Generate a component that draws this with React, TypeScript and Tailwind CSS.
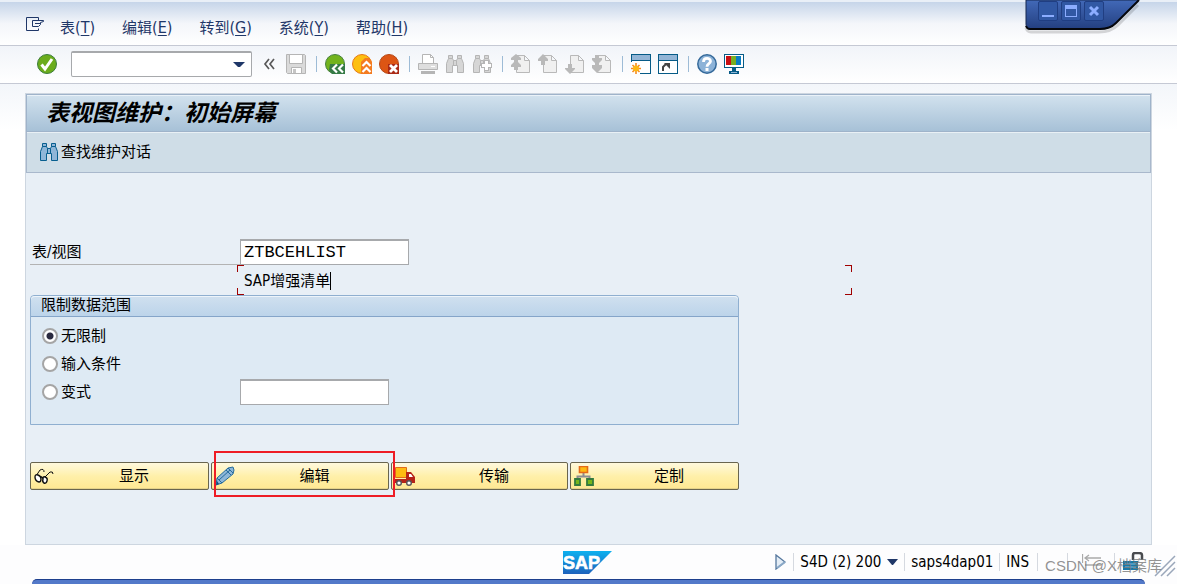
import React from "react";

const FONT = "font-['DejaVu_Sans_Condensed','Noto_Sans','Noto_Sans_CJK_SC',sans-serif]";

const MENU = [
  { label: "表", hotkey: "T" },
  { label: "编辑", hotkey: "E" },
  { label: "转到", hotkey: "G" },
  { label: "系统", hotkey: "Y" },
  { label: "帮助", hotkey: "H" },
];

function Icon({ children }: { children: React.ReactNode }) {
  return (
    <svg width="20" height="20" viewBox="0 0 20 20" fill="none" aria-hidden="true" className="block shrink-0">
      {children}
    </svg>
  );
}

function ToolButton({ title, children }: { title: string; children: React.ReactNode }) {
  return (
    <button type="button" aria-label={title} className="shrink-0">
      <Icon>{children}</Icon>
    </button>
  );
}

function Divider() {
  return <span className="ml-0.5 h-4 w-px shrink-0 bg-[#9dbbd6]" />;
}

function Binoculars({ fill, stroke }: { fill: string; stroke: string }) {
  return (
    <path
      d="M3.5 1.5h4v3l1 2h3l1-2v-3h4v3l2 5v9h-6v-7h-5v7h-6v-9l2-5zM3.5 4.5h4M12.5 4.5h4M8.5 6.5v5M11.5 6.5v5"
      fill={fill}
      stroke={stroke}
    />
  );
}

function PageShape() {
  return <path d="M5.5 1.5h8l5 5v12h-13zM13.5 1.5v5h5" fill="#f0f0f0" stroke="#b9b9b9" />;
}

function WindowShape() {
  return (
    <>
      <path d="M0 0h20v20H0z" fill="#065b87" />
      <path d="M1 1h18v5H1z" fill="#93b5d6" />
      <path d="M1 7h18v12H1z" fill="#fff" />
    </>
  );
}

function Toolbar() {
  return (
    <div className="flex h-[38px] items-center border-b border-[#c5c9d4] bg-linear-to-b from-[#f1f4f9] to-white pb-0.5 pl-[37px]">
      <ToolButton title="回车">
        <circle cx="10" cy="10" r="9.5" fill="#6bac1c" stroke="#3c7d3c" />
        <path d="M4.5 10.5l3.5 4.5 7-10" stroke="#fff" strokeWidth="3" />
      </ToolButton>
      <div className="relative ml-3.5 h-[26px] w-[181px]">
        <input aria-label="命令" className="h-full w-full rounded-xs border border-t-2 border-[#a7a9ac] bg-white px-1 outline-none" />
        <svg width="12" height="7" viewBox="0 0 12 7" className="absolute top-2.5 right-[7px]" aria-hidden="true">
          <path d="M0 1h12L7 6H5z" fill="#1f3768" />
        </svg>
      </div>
      <div className="ml-[11px] flex items-center gap-[11px]">
        <button type="button" aria-label="收起">
          <svg width="12" height="12" viewBox="0 0 12 12" fill="none" className="block">
            <path d="M6 1L2 6l4 5M11 1L7 6l4 5" stroke="#595959" strokeWidth="1.7" />
          </svg>
        </button>
        <ToolButton title="保存">
          <path d="M.5.5h18l1 1v18H1.5l-1-1z" fill="#dadada" stroke="#b5b5b5" />
          <path d="M3.5.5h13v9h-13zM5.5 13.5h10v6h-10z" fill="#fff" stroke="#b5b5b5" />
          <path d="M7 15h3v4H7z" fill="#c5c5c5" />
        </ToolButton>
      </div>
      <div className="ml-2 flex items-center gap-2">
        <Divider />
        <div className="flex gap-[7px]">
          <ToolButton title="返回">
            <circle cx="10" cy="10" r="9.5" fill="#72b31d" stroke="#478040" />
            <path d="M5 10h15v10H7l-3-4z" fill="#357a46" />
            <path d="M12 10.5l-4 4 4 4M18 10.5l-4 4 4 4" stroke="#fff" strokeWidth="2.2" />
          </ToolButton>
          <ToolButton title="退出">
            <circle cx="10" cy="10" r="9.5" fill="#fdbf10" stroke="#e77817" />
            <path d="M9 8l4-4h4l3 4v12H9z" fill="#f47b20" />
            <path d="M10.5 12l4-4 4 4M10.5 18l4-4 4 4" stroke="#fff" strokeWidth="2.2" />
          </ToolButton>
          <ToolButton title="取消">
            <circle cx="10" cy="10" r="9.5" fill="#dd5514" stroke="#b64716" />
            <path d="M9 10h11v10H9z" fill="#aa2a16" />
            <path d="M11 11l7 7M18 11l-7 7" stroke="#fff" strokeWidth="2.8" />
          </ToolButton>
        </div>
        <Divider />
        <div className="flex gap-[7px]">
          <ToolButton title="打印">
            <path d="M4.5 9.5v-9h8l3 3v6" fill="#fff" stroke="#b5b5b5" />
            <path d="M12.5.5v3h3" stroke="#b5b5b5" />
            <path d="M.5 9.5h19v6H.5z" fill="#dedede" stroke="#b5b5b5" />
            <path d="M3 17h14v3H3z" fill="#b5b5b5" />
            <path d="M13 12h4v1h-4z" fill="#fff" />
          </ToolButton>
          <ToolButton title="查找">
            <Binoculars fill="#d6d6d6" stroke="#b5b5b5" />
          </ToolButton>
          <ToolButton title="查找下一个">
            <Binoculars fill="#d6d6d6" stroke="#b5b5b5" />
            <path d="M9 9h3V6h5v3h3v5h-3v3h-5v-3H9z" fill="#b5b5b5" />
            <path d="M13 7h3v3h3v3h-3v3h-3v-3h-3v-3h3z" fill="#fff" />
          </ToolButton>
        </div>
        <Divider />
        <div className="flex gap-[7px]">
          <ToolButton title="第一页">
            <PageShape />
            <path d="M5 0l5 4v2H7v2l3 3v2H7v3H3v-3H0v-2l3-3V6H0V4z" fill="#b9b9b9" />
          </ToolButton>
          <ToolButton title="上一页">
            <PageShape />
            <path d="M5 0l5 5v2H7v4H3V7H0V5z" fill="#b9b9b9" />
          </ToolButton>
          <ToolButton title="下一页">
            <PageShape />
            <path d="M3 10h4v4h3v1l-5 5-5-5v-1h3z" fill="#b9b9b9" />
          </ToolButton>
          <ToolButton title="最后一页">
            <PageShape />
            <path d="M3 1h4v3h3v2L7 9v2h3v3l-5 5-5-5v-3h3V9L0 6V4h3z" fill="#b9b9b9" />
          </ToolButton>
        </div>
        <Divider />
        <div className="flex gap-[7px]">
          <ToolButton title="新建会话">
            <WindowShape />
            <path d="M0 8h9v12H0z" fill="#fff" />
            <path d="M5 9v11M0 14.5h10M1.5 11l7 7M8.5 11l-7 7" stroke="#f58a1f" strokeWidth="1.6" />
            <circle cx="5" cy="14.5" r="3" fill="#fdb813" />
          </ToolButton>
          <ToolButton title="创建快捷方式">
            <WindowShape />
            <path d="M5 17v-4l3-3h1" stroke="#444" strokeWidth="2" />
            <path d="M6 9h6v6z" fill="#444" />
          </ToolButton>
        </div>
        <Divider />
        <div className="flex gap-[7px]">
          <ToolButton title="帮助">
            <circle cx="10" cy="10" r="9.2" fill="#8db3d8" stroke="#34699a" strokeWidth="1.5" />
            <path d="M6.5 8c0-5 7-4.5 7-.8 0 2.5-3.5 2.5-3.5 5.5" stroke="#fff" strokeWidth="2.8" />
            <path d="M8.5 14h3v3h-3z" fill="#fff" />
          </ToolButton>
          <ToolButton title="定制本地布局">
            <path d="M0 0h20v14H0z" fill="#065b87" />
            <path d="M1 1h18v12H1z" fill="#fff" />
            <path d="M2 2h5v9H2z" fill="#c80f14" />
            <path d="M7 2h5v9H7z" fill="#78ad21" />
            <path d="M12 2h5v9h-5z" fill="#087cc2" />
            <path d="M8 14h4v3h3v3H5v-3h3z" fill="#065b87" />
            <path d="M7 18h6v1H7z" fill="#8fb5d5" />
          </ToolButton>
        </div>
      </div>
    </div>
  );
}

function WindowControls() {
  const box = "flex size-5 items-center justify-center rounded-xs border border-[#203e82] bg-[#3158a4]";
  return (
    <div className="absolute top-0 right-8 h-9 w-[122px]">
      <svg width="122" height="36" viewBox="0 0 122 36" className="absolute inset-0" aria-hidden="true">
        <defs>
          <linearGradient id="tab" x1="0" y1="0" x2="0" y2="1">
            <stop offset="0" stopColor="#4269b8" />
            <stop offset="1" stopColor="#233f80" />
          </linearGradient>
        </defs>
        <path d="M3 28q1 4 5 4h68q12 0 19-7l20-20" stroke="#000" strokeOpacity=".15" strokeWidth="3" fill="none" />
        <path d="M3 0v24q0 5 4 5h70q10 0 16-6L116 0z" fill="url(#tab)" stroke="#14264f" />
        <path d="M3 26q1 3 4 3h70q10 0 16-6L116 0" stroke="#05070d" strokeWidth="2" fill="none" />
      </svg>
      <div className="relative flex gap-[3px] pt-px pl-[15px]">
        <button type="button" aria-label="最小化" className={box}>
          <svg width="14" height="14" viewBox="0 0 14 14">
            <path d="M1 11h12v2H1z" fill="#8cadff" />
          </svg>
        </button>
        <button type="button" aria-label="最大化" className={box}>
          <svg width="14" height="14" viewBox="0 0 14 14">
            <path d="M1 1h12v12H1zM2 5v7h10V5z" fillRule="evenodd" fill="#8cadff" />
          </svg>
        </button>
        <button type="button" aria-label="关闭" className={box}>
          <svg width="14" height="14" viewBox="0 0 14 14">
            <path d="M3 3l8 8M11 3l-8 8" stroke="#8cadff" strokeWidth="3" />
          </svg>
        </button>
      </div>
    </div>
  );
}

function ActionButton({ label, icon, width }: { label: string; icon: React.ReactNode; width: string }) {
  return (
    <button
      type="button"
      className={`${width} flex h-7 items-center rounded-xs border border-[#69654f] bg-linear-to-b from-[#fff9dd] via-[#fff0aa] to-[#ffe892] pl-[3px] shadow-[inset_0_-1px_0_#e4d28a]`}
    >
      {icon}
      <span className="flex-1 pl-1.5 text-center">{label}</span>
    </button>
  );
}

function Actions() {
  return (
    <div className="relative mt-[37px] flex gap-[2px]">
      <ActionButton
        label="显示"
        width="w-[179px]"
        icon={
          <Icon>
            <path d="M2 10l4-6q4-2 4 2M11 11l5-5q3-1 3 2" stroke="#111" />
            <path d="M1 11q0-3 3-2 3 1 3 4t-2 3Q1 15 1 11zM9 13q0-3 2-2 3 1 2 4t-3 2q-2-1-1-4zM6 11q2-1 3 2" stroke="#111" strokeWidth="1.4" fill="#fff" />
          </Icon>
        }
      />
      <ActionButton
        label="编辑"
        width="w-[178px]"
        icon={
          <Icon>
            <path d="M1 19l1-7L13 2l5-1 1 3-1 4L7 17z" fill="#8db6d8" stroke="#246b9b" />
            <path d="M4 14L15 4M2 12l5 5M11 4l5 5M13 2l5 5" stroke="#246b9b" />
            <path d="M1 19l1-4 2 3z" fill="#0d517e" />
          </Icon>
        }
      />
      <ActionButton
        label="传输"
        width="w-[177px]"
        icon={
          <Icon>
            <path d="M.5 1.5h11v10H.5z" fill="#fdbb12" stroke="#e26a1b" />
            <path d="M11 6h5l4 5v6H0v-4h11z" fill="#b52318" />
            <path d="M14 8h2l2 3h-4z" fill="#fff" />
            <circle cx="4" cy="17" r="2.3" fill="#fff" stroke="#55565a" strokeWidth="1.4" />
            <circle cx="14" cy="17" r="2.3" fill="#fff" stroke="#55565a" strokeWidth="1.4" />
          </Icon>
        }
      />
      <ActionButton
        label="定制"
        width="w-[169px]"
        icon={
          <Icon>
            <path d="M9.5 7v4M3.5 13v-2.5h12V13" stroke="#8d8d92" strokeWidth="2" />
            <path d="M5.5.5h8v6h-8z" fill="#fdbb12" stroke="#e56a19" strokeWidth="1.6" />
            <path d="M1 13h5v6H1zM13 13h6v6h-6z" fill="#76b51b" stroke="#347a3d" strokeWidth="1.8" />
          </Icon>
        }
      />
      {/* highlight frame around the edit action */}
      <div className="pointer-events-none absolute -top-[11px] left-[184px] h-[46px] w-[181px] border-2 border-[#ee1c25]" />
    </div>
  );
}

function SelectionForm() {
  const radio =
    "size-4 appearance-none rounded-full border-2 border-[#a5a5a5] bg-white checked:bg-[radial-gradient(circle,#2b2b40_3px,#ffffff_4px)]";
  return (
    <form className="flex w-[709px] flex-col" onSubmit={(e) => e.preventDefault()}>
      <div className="flex h-[26px]">
        <label htmlFor="view" className="w-[210px] border-b border-[#b3b3b3] pl-0.5 leading-[26px]">
          表/视图
        </label>
        <input
          id="view"
          defaultValue="ZTBCEHLIST"
          className="w-[169px] border border-t-2 border-[#a7a9ac] bg-white px-[3px] font-['Liberation_Mono',monospace] text-[17px] outline-none"
        />
      </div>
      <div className="relative ml-[207px] h-[30px] w-[615px] pl-[7px] leading-[30px]">
        <span className="inline-block h-[18px] border-r border-black align-middle leading-[18px]">SAP增强清单</span>
        <span className="absolute top-0 left-0 size-[7px] border-t border-l border-[#a00000]" />
        <span className="absolute bottom-0 left-0 size-[7px] border-b border-l border-[#a00000]" />
        <span className="absolute top-0 right-0 size-[7px] border-t border-r border-[#a00000]" />
        <span className="absolute right-0 bottom-0 size-[7px] border-r border-b border-[#a00000]" />
      </div>
      <section className="h-[130px] rounded-t-sm border border-[#8fafd0] bg-[#deeaf4]">
        <h2 className="h-[21px] rounded-t-sm border-b border-[#85a5c9] bg-linear-to-b from-[#d0e0ef] to-[#bcd4ea] pl-2.5 leading-[18px] shadow-[inset_0_1px_0_#edf4fa]">
          限制数据范围
        </h2>
        <div className="flex flex-col pt-[5px] pl-[11px]">
          <label className="flex h-7 items-center gap-[3px]">
            <input type="radio" name="scope" defaultChecked className={radio} />
            无限制
          </label>
          <label className="flex h-7 items-center gap-[3px]">
            <input type="radio" name="scope" className={radio} />
            输入条件
          </label>
          <div className="flex h-7 items-center">
            <label className="flex w-[198px] items-center gap-[3px]">
              <input type="radio" name="scope" className={radio} />
              变式
            </label>
            <input aria-label="变式名称" className="h-[26px] w-[149px] border border-t-2 border-[#a7a9ac] bg-white px-1 outline-none" />
          </div>
        </div>
      </section>
      <Actions />
    </form>
  );
}

function StatusBar() {
  const sep = "h-[18px] w-px bg-[#d5d9e0]";
  return (
    <footer className="relative flex h-[34px] items-center justify-between pl-[563px]">
      <svg width="49" height="23" viewBox="0 0 49 23" aria-label="SAP">
        <defs>
          <linearGradient id="logo" x1="0" y1="0" x2="0" y2="1">
            <stop offset="0" stopColor="#0db1ef" />
            <stop offset="1" stopColor="#1d61bc" />
          </linearGradient>
        </defs>
        <path d="M0 0h49L26 23H0z" fill="url(#logo)" />
        <text x="0" y="18" fill="#fff" stroke="#fff" strokeWidth=".6" fontFamily="Liberation Sans, sans-serif" fontWeight="bold" fontSize="18">
          SAP
        </text>
      </svg>
      <div className="flex items-center">
        <svg width="11" height="16" viewBox="0 0 11 16" aria-hidden="true">
          <path d="M1 1l9 7-9 7z" fill="#e4edf6" stroke="#55779d" strokeWidth="1.3" />
          <path d="M2 14l8-6" stroke="#8ba9c8" strokeWidth="2" />
        </svg>
        <span className={`${sep} mr-1.5 ml-[7px]`} />
        <button type="button" className="flex items-center gap-1.5">
          S4D (2) 200
          <svg width="11" height="6" viewBox="0 0 11 6" aria-hidden="true">
            <path d="M0 0h11L6 6H5z" fill="#1f3768" />
          </svg>
        </button>
        <span className={`${sep} mx-1.5`} />
        <span>saps4dap01</span>
        <span className={`${sep} mx-1.5`} />
        <span>INS</span>
        <span className={`${sep} ml-2`} />
        <span className={`${sep} ml-[29px]`} />
        <svg width="20" height="16" viewBox="0 0 20 16" fill="none" className="ml-3.5" aria-hidden="true">
          <path d="M.5 0v9M3 4h16M7 1L3 4l4 3M3 11h16" stroke="#aaa" strokeWidth="1.3" />
        </svg>
        <span className={`${sep} ml-3`} />
        <svg width="24" height="20" viewBox="0 0 24 20" fill="none" className="ml-2" aria-hidden="true">
          <path d="M10 8V3q0-2 2-2h4q3 0 3 2v5" stroke="#494b4f" strokeWidth="2.5" />
          <path d="M0 9h15v9H0z" fill="#1878a9" />
          <path d="M2 12h11M2 15h11" stroke="#8bbbd4" />
        </svg>
        <svg width="23" height="24" viewBox="0 0 23 24" fill="none" className="mt-2 ml-[7px]" aria-hidden="true">
          <path d="M1 22L21 2M7 22L21 8M13 22l8-8" stroke="#9aa7ba" strokeWidth="1.5" />
        </svg>
      </div>
      <span className="absolute right-[15px] bottom-[3px] font-['Liberation_Sans','Noto_Sans_CJK_SC',sans-serif] text-[15px] leading-[20px] whitespace-nowrap text-[#777777]/80">
        CSDN @X档案库
      </span>
    </footer>
  );
}

export default function App() {
  return (
    <div className={`relative flex min-h-screen flex-col overflow-hidden bg-[#fdfdfe] text-[15px] text-black ${FONT}`}>
      <nav className="flex h-[46px] items-center border-t-2 border-b border-t-[#e9eff7] border-b-[#c5c9d4] bg-linear-to-b from-[#c6d5e9] via-[#f4f6fa] via-50% to-white pl-[26px] text-[#1f3768]">
        <button type="button" aria-label="菜单" className="mr-4">
          <svg width="18" height="14" viewBox="0 0 18 14" fill="none" className="block">
            <path d="M12.5 3.5v-3H.5v13h12v-2" stroke="#1f3768" />
            <path d="M6.5 3.5h11v1l-3 1v2l-2 2h-6zM9 6.5h5" stroke="#1f3768" />
          </svg>
        </button>
        <div className="flex gap-[27px] pt-2">
          {MENU.map((item) => (
            <button key={item.hotkey} type="button" className="whitespace-nowrap">
              {item.label}
              <span className="text-base">
                (<span className="underline underline-offset-2">{item.hotkey}</span>)
              </span>
            </button>
          ))}
        </div>
      </nav>
      <WindowControls />
      <Toolbar />
      <div className="flex flex-1 flex-col bg-linear-to-b from-[#f3f6fa] to-white to-10% px-[25px]">
        <main className="mt-[9px] flex flex-1 flex-col border border-[#cdd6e0] bg-[#e8eff6]">
          <h1 className="flex h-[38px] items-center border border-[#9fb3ca] bg-linear-to-b from-[#d2e2ee] to-[#a7c1d7] pl-[19px] text-[23px] font-bold italic shadow-[inset_0_1px_0_#eaf2f8]">
            表视图维护：初始屏幕
          </h1>
          <div className="flex h-[41px] items-center border border-t-0 border-[#a9b8cc] bg-[#cfdde7] pl-3 shadow-[inset_0_1px_0_#e9f0f5]">
            <button type="button" className="flex items-center gap-0.5">
              <Icon>
                <Binoculars fill="#8fb6d8" stroke="#075e8f" />
              </Icon>
              查找维护对话
            </button>
          </div>
          <div className="flex-1 pt-[66px] pl-1">
            <SelectionForm />
          </div>
        </main>
      </div>
      <StatusBar />
      <div className="mx-8 h-[5px] rounded-t-[32px] border-t border-[#1d3f8d] bg-[#5379c9]" />
    </div>
  );
}
